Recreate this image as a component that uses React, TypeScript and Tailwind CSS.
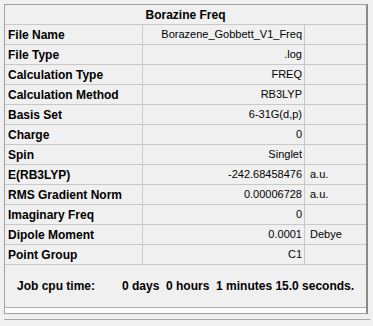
const rows = [
  { label: "File Name", value: "Borazene_Gobbett_V1_Freq", unit: "" },
  { label: "File Type", value: ".log", unit: "" },
  { label: "Calculation Type", value: "FREQ", unit: "" },
  { label: "Calculation Method", value: "RB3LYP", unit: "" },
  { label: "Basis Set", value: "6-31G(d,p)", unit: "" },
  { label: "Charge", value: "0", unit: "" },
  { label: "Spin", value: "Singlet", unit: "" },
  { label: "E(RB3LYP)", value: "-242.68458476", unit: "a.u." },
  { label: "RMS Gradient Norm", value: "0.00006728", unit: "a.u." },
  { label: "Imaginary Freq", value: "0", unit: "" },
  { label: "Dipole Moment", value: "0.0001", unit: "Debye" },
  { label: "Point Group", value: "C1", unit: "" },
];

export default function App() {
  return (
    <div
      className="w-[373px] h-[326px] bg-[#f0f0f0] text-black pt-[4px] pl-[4px] overflow-hidden"
      style={{ fontFamily: '"Liberation Sans", Arial, sans-serif' }}
    >
      {/* summary panel */}
      <div className="w-[364px] border-l border-t border-[#a0a0a0] border-r-2 border-r-[#8a8a8a] border-b border-b-[#a0a0a0]">
        <div className="h-[20px] border-b border-[#c8c8c8] flex items-center justify-center text-[12px] font-bold">
          Borazine Freq
        </div>

        {rows.map((row) => (
          <div key={row.label} className="h-[20px] flex border-b border-[#c8c8c8]">
            <div className="w-[138px] border-r border-[#c8c8c8] pl-[3px] flex items-center text-[12px] font-bold">
              {row.label}
            </div>
            <div className="w-[162px] border-r border-[#c8c8c8] pr-[2px] flex items-center justify-end text-[11px]">
              {row.value}
            </div>
            <div className="flex-1 pl-[5px] flex items-center text-[11px]">{row.unit}</div>
          </div>
        ))}

        <div className="h-[43px] border-b border-[#b0b0b0] flex items-center text-[12px] font-bold">
          <span className="pl-[12px] w-[117px]">Job cpu time:</span>
          <span className="whitespace-pre">0 days  0 hours  1 minutes 15.0 seconds.</span>
        </div>
        <div className="h-[5px] bg-white" />
      </div>

      <div className="mt-[5px] w-[366px] h-px bg-[#a8a8a8]" />
    </div>
  );
}
